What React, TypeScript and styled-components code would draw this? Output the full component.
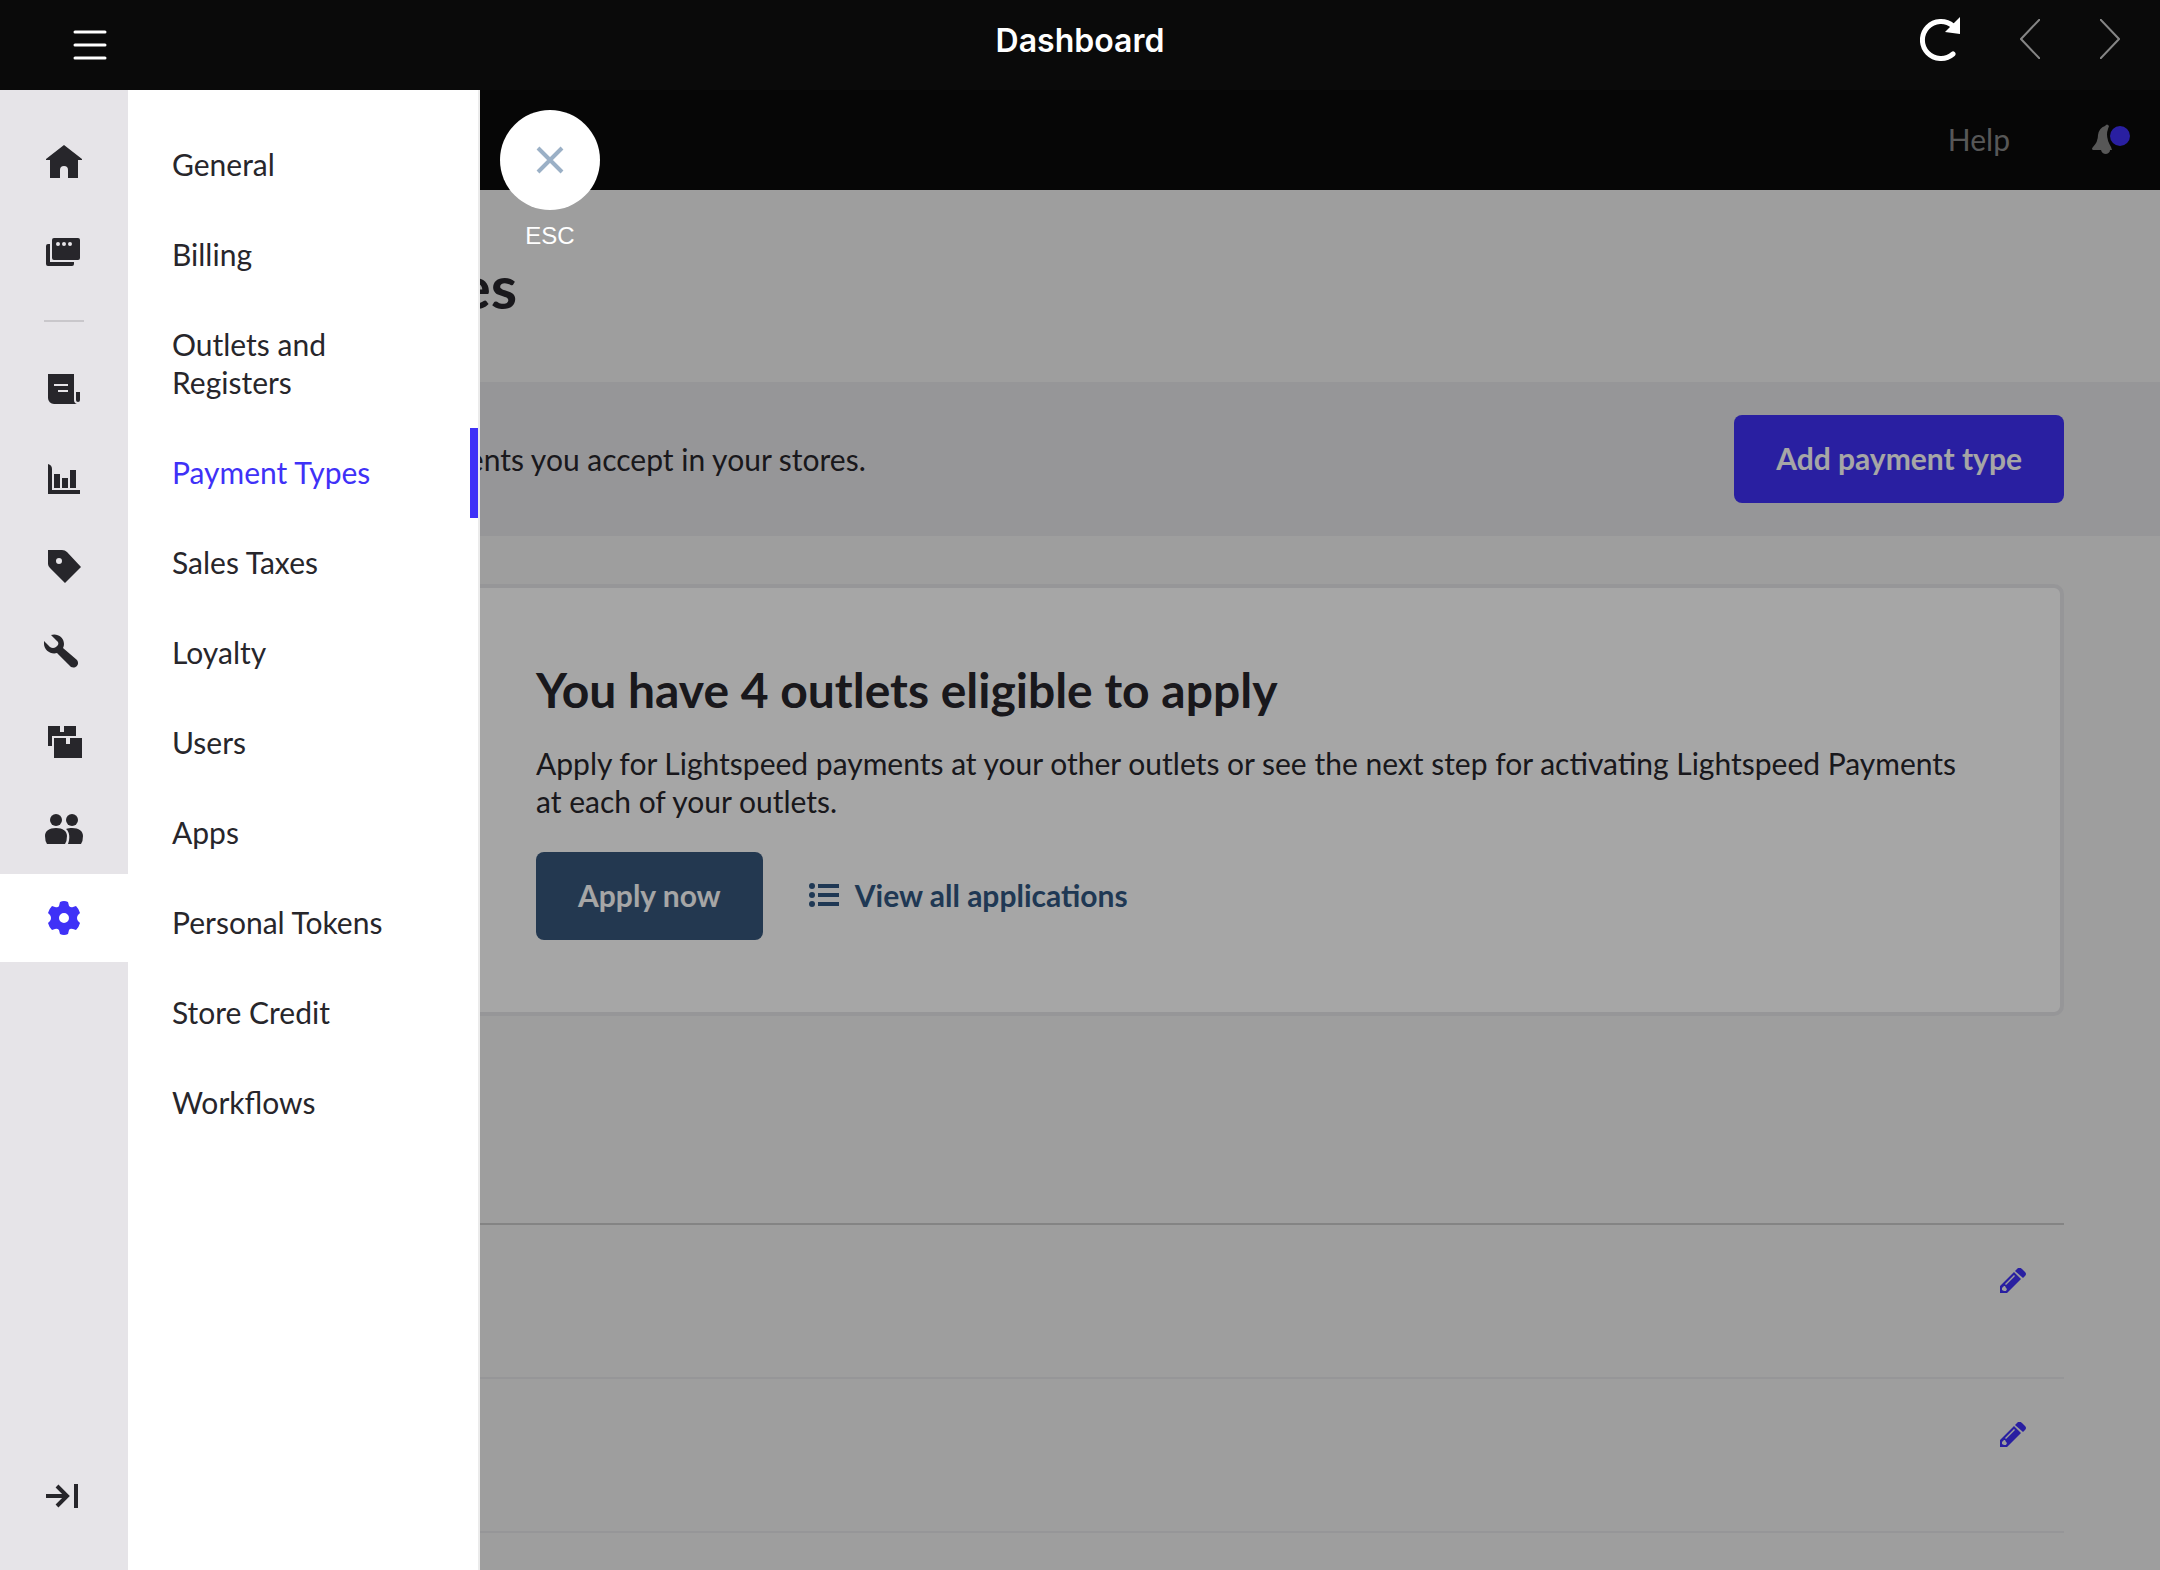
import React from 'react';
import styled, { createGlobalStyle } from 'styled-components';

const Global = createGlobalStyle`
  *, *::before, *::after { box-sizing: border-box; }
  html, body, #root { height: 100%; }
  body { margin: 0; background: #f3f3f3; color: #27262b; font: 400 30px/38px Lato, sans-serif; overflow: hidden; }
  h1, h2, p, ul { margin: 0; padding: 0; }
  ul { list-style: none; }
  button { font: inherit; color: inherit; border: 0; background: none; padding: 0; cursor: pointer; }
  a { color: inherit; text-decoration: none; }
  svg { display: block; }
`;

const Shell = styled.div`
  display: grid;
  grid-template-rows: 90px minmax(0, 1fr);
  height: 100vh;
`;

const TitleBar = styled.header`
  display: grid;
  grid-template-columns: 1fr auto 1fr;
  align-items: center;
  padding: 0 30px;
  background: #0a0a0a;
  color: #fff;
`;

const AppTitle = styled.h1`
  padding-bottom: 8px;
  font: 600 32px/40px Inter, sans-serif;
`;

const BarButton = styled.button`
  display: grid;
  place-items: center;
  width: 40px;
  height: 44px;
`;

const MenuButton = styled(BarButton)`
  margin-left: 40px;
`;

const BarActions = styled.div`
  display: flex;
  justify-content: flex-end;
  gap: 50px;
  padding-bottom: 12px;
`;

const HistoryButtons = styled.div`
  display: flex;
  gap: 40px;
`;

const Workspace = styled.div`
  position: relative;
  display: grid;
  grid-template-columns: 128px minmax(0, 1fr);
  min-height: 0;
`;

const Rail = styled.nav`
  display: flex;
  flex-direction: column;
  padding: 28px 0 30px;
  background: #e6e4e8;
`;

const RailItem = styled.a<{ $active?: boolean }>`
  display: grid;
  place-items: center;
  height: 88px;
  color: ${p => (p.$active ? '#3f31f7' : '#27262b')};
  background: ${p => (p.$active ? '#fff' : 'transparent')};
`;

const RailDivider = styled.hr`
  width: 40px;
  height: 2px;
  margin: 26px auto 24px;
  border: 0;
  background: #c9c7cb;
`;

const RailToggle = styled.button`
  display: grid;
  place-items: center;
  height: 88px;
  margin-top: auto;
`;

const Page = styled.div`
  min-width: 0;
  overflow: hidden;
`;

const PageBar = styled.div`
  display: flex;
  align-items: center;
  justify-content: flex-end;
  gap: 82px;
  height: 100px;
  padding: 0 28px 2px;
  background: #0a0a0a;
  color: #868686;
`;

const Bell = styled.button`
  position: relative;
  width: 40px;
  height: 40px;
`;

const Dot = styled.span`
  position: absolute;
  top: 7px;
  right: 2px;
  width: 20px;
  height: 20px;
  border-radius: 50%;
  background: #3f31f7;
`;

const PageHead = styled.div`
  display: flex;
  align-items: center;
  height: 192px;
  padding: 0 96px 0 234px;
`;

const PageTitle = styled.h2`
  font-size: 60px;
  line-height: 72px;
  font-weight: 700;
`;

const Band = styled.div`
  display: flex;
  align-items: center;
  justify-content: space-between;
  padding: 33px 96px 33px 234px;
  background: #e7e7ea;
`;

const Button = styled.button<{ $tone: string }>`
  height: 88px;
  padding: 0 42px 2px;
  border-radius: 8px;
  background: ${p => p.$tone};
  color: #fff;
  font-weight: 700;
`;

const Content = styled.div`
  padding: 48px 96px 0 32px;
`;

const Card = styled.section`
  padding: 74px 90px 72px 372px;
  border: 4px solid #e7e7ea;
  border-radius: 10px;
  background: #fff;
`;

const CardTitle = styled.h2`
  font-size: 48px;
  line-height: 56px;
  margin-bottom: 26px;
`;

const CardActions = styled.div`
  display: flex;
  align-items: center;
  gap: 46px;
  margin-top: 32px;
`;

const CardLink = styled.a`
  display: flex;
  align-items: center;
  gap: 16px;
  padding-bottom: 2px;
  color: #315781;
  font-weight: 700;
`;

const TypeList = styled.ul`
  margin-top: 207px;
  border-top: 2px solid #cbcbcb;
`;

const TypeRow = styled.li`
  display: flex;
  align-items: flex-start;
  justify-content: flex-end;
  height: 154px;
  padding: 43px 38px;
  border-bottom: 2px solid #e7e7ea;
  color: #3f31f7;
`;

const Overlay = styled.div`
  position: absolute;
  inset: 0 0 0 128px;
  display: flex;
  align-items: stretch;
  background: rgba(0, 0, 0, 0.35);
`;

const Panel = styled.nav`
  width: 352px;
  padding-top: 30px;
  border-right: 2px solid #ebebeb;
  background: #fff;
`;

const PanelLink = styled.a<{ $active?: boolean }>`
  display: block;
  padding: 25px 80px 27px 44px;
  border-right: ${p => (p.$active ? '8px solid #3f31f7' : '8px solid transparent')};
  color: ${p => (p.$active ? '#3f31f7' : 'inherit')};
`;

const Closer = styled.div`
  display: flex;
  flex-direction: column;
  align-items: center;
  gap: 12px;
  padding: 20px;
  color: #fff;
  font: 400 24px/28px 'Liberation Sans', Arial, sans-serif;
`;

const CloseButton = styled.button`
  display: grid;
  place-items: center;
  width: 100px;
  height: 100px;
  border-radius: 50%;
  background: #fff;
  color: #9bb0c6;
`;

const HomeIcon = () => (
  <svg width="36" height="34" viewBox="0 0 36 34" fill="currentColor">
    <path d="M18 0 36 14V15H32V33H22V25a4 4 0 0 0-8 0v8H4V15H0v-1Z" />
  </svg>
);
const RegisterIcon = () => (
  <svg width="36" height="32" viewBox="0 -4 36 32" fill="currentColor">
    <path fillRule="evenodd" d="M8 0H32a2 2 0 0 1 2 2V20a2 2 0 0 1-2 2H8a2 2 0 0 1-2-2V2a2 2 0 0 1 2-2ZM12 4a2 2 0 1 0 0 4 2 2 0 1 0 0-4Zm6 0a2 2 0 1 0 0 4 2 2 0 1 0 0-4Zm6 0a2 2 0 1 0 0 4 2 2 0 1 0 0-4Z" />
    <path d="M0 8a2 2 0 0 1 2-2H4V24H28V26a2 2 0 0 1-2 2H2a2 2 0 0 1-2-2Z" />
  </svg>
);
const ReceiptIcon = () => (
  <svg width="32" height="32" viewBox="0 0 32 32" fill="currentColor">
    <path fillRule="evenodd" d="M0 0H26V26q0 3 3 4H6a6 6 0 0 1-6-6ZM6 10v2H20v-2Zm4 6v2H20v-2Z" />
    <path d="M28 18h4v8q0 2-2 2t-2-2Z" />
  </svg>
);
const ReportIcon = () => (
  <svg width="32" height="32" viewBox="0 -2 32 32" fill="currentColor">
    <path d="M0 0q4 1 4 5V26H32v4H0ZM6 10h6V24H6Zm8 4h6V24h-6Zm8-8h6V24h-6Z" />
  </svg>
);
const TagIcon = () => (
  <svg width="33" height="33" viewBox="0 0 33 33" fill="currentColor">
    <path fillRule="evenodd" d="M0 0H14q3 0 5 2L33 17 17 33 2 18q-2-2-2-4ZM11 8a3 3 0 1 0 0 6 3 3 0 1 0 0-6Z" />
  </svg>
);
const WrenchIcon = () => (
  <svg width="40" height="40" viewBox="0 0 40 40" fill="currentColor">
    <path d="M7 1C13-1 20 3 20 10q0 2-1 4L33 26c3 4-1 9-6 7L13 19C7 21 0 16 0 10V7l6 6q3 2 6 0l2-2q1-3-1-4Z" />
  </svg>
);
const BoxesIcon = () => (
  <svg width="36" height="32" viewBox="-2 0 36 32" fill="currentColor">
    <path d="M0 0H12V6h4V0H28V10H4V20H0ZM6 12H18v6h4V12H34V32H6Z" />
  </svg>
);
const PeopleIcon = () => (
  <svg width="38" height="32" viewBox="0 0 38 32" fill="currentColor">
    <circle cx="11" cy="6" r="6" />
    <circle cx="27" cy="6" r="6" />
    <path d="M11 14c7 0 11 3 11 8q0 5-2 8H2q-2-3-2-8c0-5 4-8 11-8ZM21 15c2-1 4-1 6-1 7 0 11 3 11 8q0 5-2 8H23c2-5 2-12-2-15Z" />
  </svg>
);
const GearIcon = () => (
  <svg width="32" height="34" viewBox="0 0 32 34" fill="currentColor">
    <path fillRule="evenodd" d="M12 1q4-2 8 0l1 4q2 2 4 1l3-1q3 3 4 7l-2 2q-2 3 0 6l2 2q-1 4-4 7l-3-1q-3-1-4 1l-1 4q-4 2-8 0l-1-4q-2-2-4-1l-3 1q-3-3-4-7l2-2q2-3 0-6l-2-2q1-4 4-7l3 1q3 1 4-1ZM16 12a5 5 0 1 0 0 10 5 5 0 1 0 0-10Z" />
  </svg>
);
const ExpandIcon = () => (
  <svg width="36" height="24" viewBox="0 0 36 24" fill="none" stroke="currentColor" strokeWidth="4">
    <path d="M0 12H20M11 2 21 12 11 22M30 0V24" />
  </svg>
);
const PencilIcon = () => (
  <svg width="26" height="26" viewBox="0 0 26 26" fill="currentColor">
    <path fillRule="evenodd" d="M14 4 21 11 7 25H0V18ZM4 18l-2 2v2l2 1h2l1-2-1-1-1-2ZM14 7 5 16l1 1 9-9Z" />
    <path d="M15 3 18 0q2-1 4 1l3 3q2 2 0 4l-2 2Z" />
  </svg>
);

const railTop = [
  { label: 'Home', icon: <HomeIcon /> },
  { label: 'Sell', icon: <RegisterIcon /> },
];
const railMain = [
  { label: 'Sales', icon: <ReceiptIcon /> },
  { label: 'Reporting', icon: <ReportIcon /> },
  { label: 'Catalog', icon: <TagIcon /> },
  { label: 'Services', icon: <WrenchIcon /> },
  { label: 'Inventory', icon: <BoxesIcon /> },
  { label: 'Customers', icon: <PeopleIcon /> },
  { label: 'Setup', icon: <GearIcon />, active: true },
];
const sections = [
  'General', 'Billing', 'Outlets and Registers', 'Payment Types', 'Sales Taxes', 'Loyalty',
  'Users', 'Apps', 'Personal Tokens', 'Store Credit', 'Workflows',
];

export default function App() {
  return (
    <Shell>
      <Global />
      <TitleBar>
        <MenuButton aria-label="Menu">
          <svg width="36" height="32" viewBox="0 0 36 32" stroke="#fff" strokeWidth="3" strokeLinecap="round">
            <path d="M3 3H33M3 16H33M3 29H33" />
          </svg>
        </MenuButton>
        <AppTitle>Dashboard</AppTitle>
        <BarActions>
          <BarButton aria-label="Reload">
            <svg width="40" height="44" viewBox="0 0 40 44" fill="none" stroke="#fff" strokeWidth="5">
              <path d="M33 37A18.500 18.500 0 1 1 33 9" strokeLinecap="round" />
              <path d="M40 0V17L25 15Z" fill="#fff" stroke="none" />
            </svg>
          </BarButton>
          <HistoryButtons>
            <BarButton aria-label="Back">
              <svg width="20" height="40" viewBox="0 0 20 40" fill="none" stroke="#858585" strokeWidth="2">
                <path d="M20 0 1 20 20 40" />
              </svg>
            </BarButton>
            <BarButton aria-label="Forward">
              <svg width="20" height="40" viewBox="0 0 20 40" fill="none" stroke="#858585" strokeWidth="2">
                <path d="M0 0 19 20 0 40" />
              </svg>
            </BarButton>
          </HistoryButtons>
        </BarActions>
      </TitleBar>
      <Workspace>
        <Rail aria-label="Main">
          {railTop.map(i => <RailItem key={i.label} href="#" aria-label={i.label}>{i.icon}</RailItem>)}
          <RailDivider />
          {railMain.map(i => (
            <RailItem key={i.label} href="#" aria-label={i.label} $active={i.active}>{i.icon}</RailItem>
          ))}
          <RailToggle aria-label="Expand sidebar"><ExpandIcon /></RailToggle>
        </Rail>
        <Page>
          <PageBar>
            <a href="#">Help</a>
            <Bell aria-label="Notifications">
              <svg width="20" height="30" viewBox="0 0 20 30" fill="currentColor">
                <path d="M13 2q2-3 4 0l-1 3q-3 8 3 18l1 3h-2q0 3-4 4-4 0-5-4H1q-2-1 0-3 5-5 5-12 1-7 7-9Z" />
              </svg>
              <Dot />
            </Bell>
          </PageBar>
          <PageHead><PageTitle>Types</PageTitle></PageHead>
          <Band>
            <p>of payments you accept in your stores.</p>
            <Button $tone="#3f31f7">Add payment type</Button>
          </Band>
          <Content>
            <Card>
              <CardTitle>You have 4 outlets eligible to apply</CardTitle>
              <p>
                Apply for Lightspeed payments at your other outlets or see the next step for activating
                Lightspeed Payments at each of your outlets.
              </p>
              <CardActions>
                <Button $tone="#36577c">Apply now</Button>
                <CardLink href="#">
                  <svg width="30" height="24" viewBox="0 0 30 24" fill="currentColor">
                    <path d="M9 1H30V5H9ZM9 10H30V14H9ZM9 19H30V23H9Z" />
                    <circle cx="3" cy="3" r="3" /><circle cx="3" cy="12" r="3" /><circle cx="3" cy="21" r="3" />
                  </svg>
                  View all applications
                </CardLink>
              </CardActions>
            </Card>
            <TypeList>
              {[1, 2, 3].map(n => (
                <TypeRow key={n}>
                  <button aria-label={`Edit payment type ${n}`}><PencilIcon /></button>
                </TypeRow>
              ))}
            </TypeList>
          </Content>
        </Page>
        <Overlay>
          <Panel aria-label="Setup">
            {sections.map(s => <PanelLink key={s} href="#" $active={s === 'Payment Types'}>{s}</PanelLink>)}
          </Panel>
          <Closer>
            <CloseButton aria-label="Close">
              <svg width="28" height="28" viewBox="0 0 28 28" fill="none" stroke="currentColor" strokeWidth="4">
                <path d="M2 2 26 26M26 2 2 26" />
              </svg>
            </CloseButton>
            ESC
          </Closer>
        </Overlay>
      </Workspace>
    </Shell>
  );
}
